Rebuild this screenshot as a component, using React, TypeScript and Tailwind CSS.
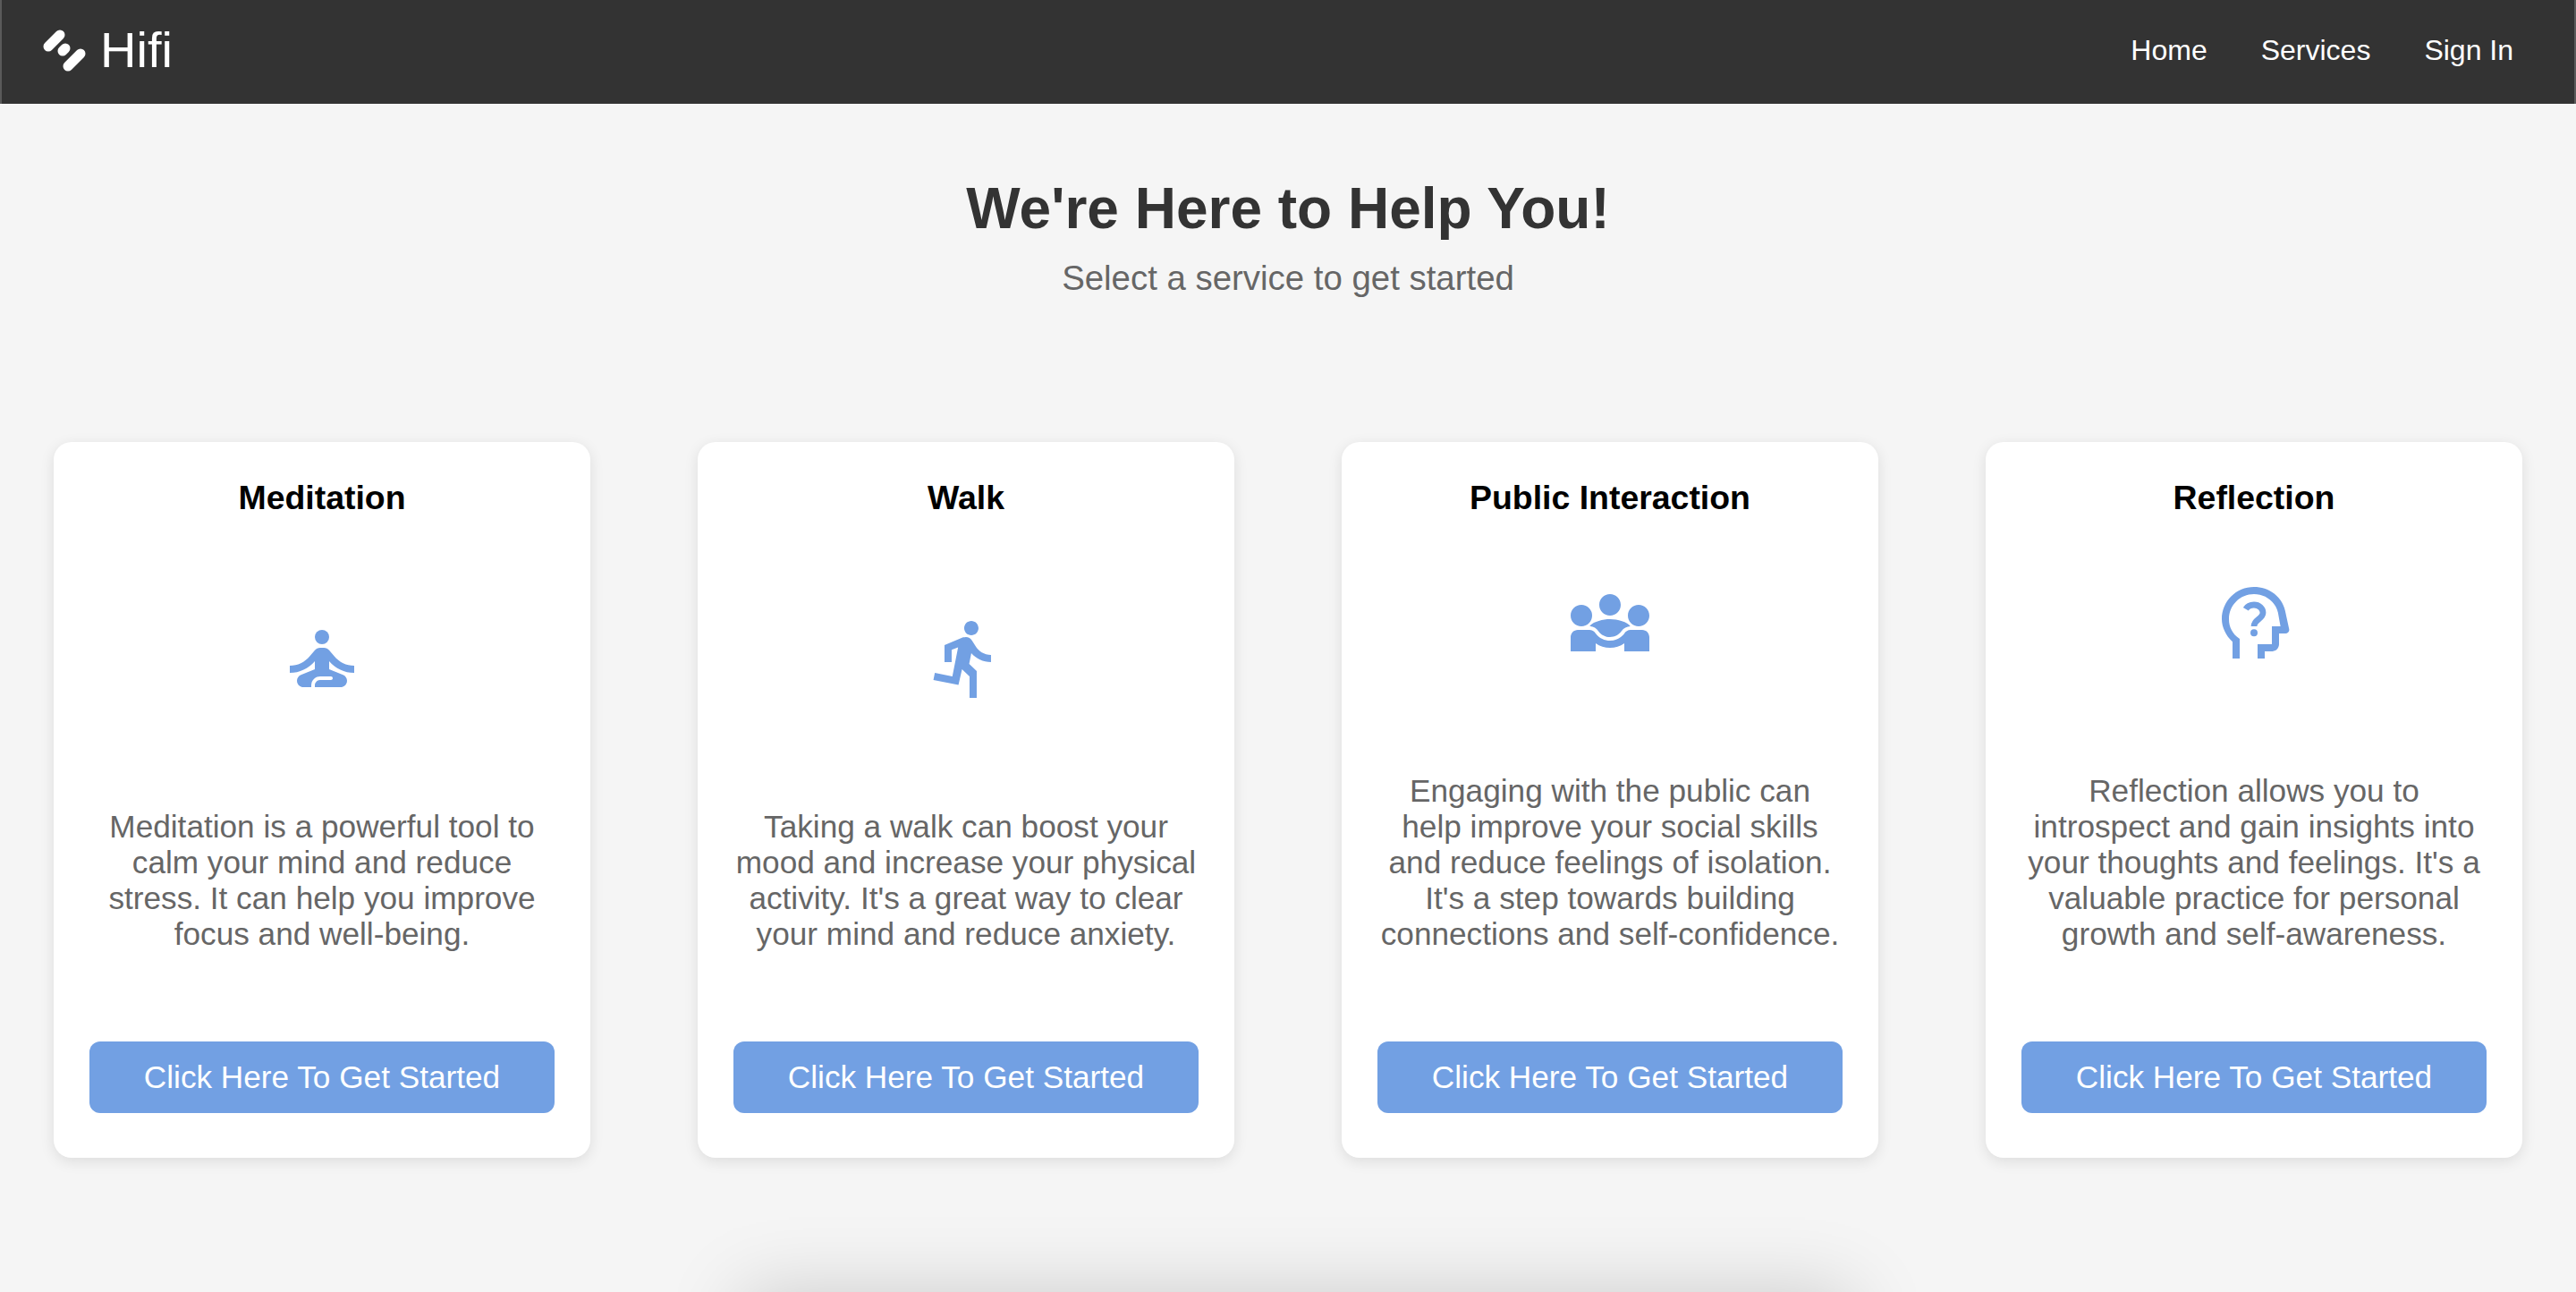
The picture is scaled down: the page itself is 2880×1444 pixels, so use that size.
import React from "react";

const services = [
  {
    title: "Meditation",
    text: "Meditation is a powerful tool to calm your mind and reduce stress. It can help you improve focus and well-being.",
    icon: (
      <>
        <circle cx="12" cy="6" r="2" />
        <path d="M21 16v-2c-2.24 0-4.16-.96-5.6-2.68l-1.34-1.6c-.38-.46-.94-.72-1.53-.72h-1.05c-.59 0-1.15.26-1.53.72l-1.34 1.6C7.16 13.04 5.24 14 3 14v2c2.77 0 5.19-1.17 7-3.25V15l-3.88 1.55c-.67.27-1.12.93-1.12 1.66C5 19.2 5.8 20 6.79 20H9v-.5c0-1.38 1.12-2.5 2.5-2.5h3c.28 0 .5.22.5.5s-.22.5-.5.5h-3c-.83 0-1.5.67-1.5 1.5v.5h7.21c.99 0 1.79-.8 1.79-1.79 0-.73-.45-1.39-1.12-1.66L14 15v-2.25c1.81 2.08 4.23 3.25 7 3.25z" />
      </>
    ),
  },
  {
    title: "Walk",
    text: "Taking a walk can boost your mood and increase your physical activity. It's a great way to clear your mind and reduce anxiety.",
    icon: (
      <path d="M13.49 5.48c1.1 0 2-.9 2-2s-.9-2-2-2-2 .9-2 2 .9 2 2 2zm-3.6 13.9l1-4.4 2.1 2v6h2v-7.5l-2.1-2 .6-3c1.3 1.5 3.3 2.5 5.5 2.5v-2c-1.9 0-3.5-1-4.3-2.4l-1-1.6c-.4-.6-1-1-1.7-1-.3 0-.5.1-.8.1l-5.2 2.2v4.7h2v-3.4l1.8-.7-1.6 8.1-4.9-1-.4 2 7 1.4z" />
    ),
  },
  {
    title: "Public Interaction",
    text: "Engaging with the public can help improve your social skills and reduce feelings of isolation. It's a step towards building connections and self-confidence.",
    icon: (
      <path d="M6.32,13.01c0.96,0.02,1.85,0.5,2.45,1.34C9.5,15.38,10.71,16,12,16c1.29,0,2.5-0.62,3.23-1.66c0.6-0.84,1.49-1.32,2.45-1.34C16.96,11.78,14.08,11,12,11c-2.07,0-4.96,0.78-5.68,2.01z M4,13L4,13c1.66,0,3-1.34,3-3c0-1.66-1.34-3-3-3h0c-1.66,0-3,1.34-3,3C1,11.66,2.34,13,4,13z M20,13L20,13c1.66,0,3-1.34,3-3c0-1.66-1.34-3-3-3h0c-1.66,0-3,1.34-3,3C17,11.66,18.34,13,20,13z M12,10c1.66,0,3-1.34,3-3c0-1.66-1.34-3-3-3h0C10.34,4,9,5.34,9,7C9,8.66,10.34,10,12,10z M21,14h-3.27c-0.77,0-1.35,0.45-1.68,0.92C16.01,14.98,14.69,17,12,17c-1.43,0-3.03-0.64-4.05-2.08C7.56,14.37,6.95,14,6.27,14H3c-1.1,0-2,0.9-2,2v4h7v-2.26c1.15,0.8,2.54,1.26,4,1.26s2.85-0.46,4-1.26V20h7v-4C23,14.9,22.1,14,21,14z" />
    ),
  },
  {
    title: "Reflection",
    text: "Reflection allows you to introspect and gain insights into your thoughts and feelings. It's a valuable practice for personal growth and self-awareness.",
    icon: (
      <>
        <path d="M6 22v-4.7C4.1 15.6 3 13.2 3 11 3 6 7 2 12 2c4.2 0 7.8 2.7 8.7 6.6l1.1 5.1c.2.7-.3 1.3-1 1.3H19v3c0 1.1-.9 2-2 2h-2v2h-2v-4h4v-5h2.4l-.7-3.9C18 6.2 15.3 4 12 4c-3.900 0-7 3.100-7 7 0 2.100.9 4.100 3 5.500V22H6z" />
        <circle cx="12" cy="14.800" r="1" />
        <path d="M9.700 8.200C10.100 7.500 11 7 12 7c1.400 0 2.500 1 2.500 2.200 0 1.800-2.500 1.800-2.500 3.800" fill="none" stroke="currentColor" strokeWidth="1.7" />
      </>
    ),
  },
];

export default function App() {
  return (
    <div className="relative h-[1444px] overflow-hidden bg-[#f5f5f5] font-['Liberation_Sans',Arial,sans-serif]">
      <header className="flex h-[116px] items-center justify-between border-x-2 border-[#5a5a5a] bg-[#333333] pr-[68px] pb-[4px] pl-[44px] text-white">
        <div className="flex items-center gap-[10px]">
          <svg width="56" height="56" viewBox="0 0 56 56" fill="none" stroke="#ffffff" strokeWidth="11" strokeLinecap="round" className="translate-y-[2px]">
            <path d="M8 22L21 9" />
            <path d="M24 27l3-3" />
            <path d="M30 44L44 30" />
          </svg>
          <span className="text-[56px] leading-none">Hifi</span>
        </div>
        <nav className="flex gap-[60px] text-[32px]">
          <a>Home</a>
          <a>Services</a>
          <a>Sign In</a>
        </nav>
      </header>

      <div className="pt-[80px] text-center">
        <h1 className="text-[64px] leading-[74px] font-bold text-[#333333]">We're Here to Help You!</h1>
        <p className="mt-[19px] text-[38.4px] leading-[44px] text-[#666666]">Select a service to get started</p>
      </div>

      <div className="mt-[161px] grid grid-cols-4 gap-[120px] px-[60px]">
        {services.map((s) => (
          <div key={s.title} className="flex h-[800px] flex-col rounded-[20px] bg-white px-[40px] pt-[40px] pb-[50px] text-center shadow-[0_4px_16px_rgba(0,0,0,0.1)]">
            <h3 className="text-[37.44px] leading-[44px] font-bold text-black">{s.title}</h3>
            <div className="flex flex-1 flex-col items-center justify-end">
              <svg width="96" height="96" viewBox="0 0 24 24" fill="currentColor" className="text-[#72a0e3]">
                {s.icon}
              </svg>
              <p className="mt-[120px] mb-[100px] text-[35.2px] leading-[40px] text-[#666666]">{s.text}</p>
              <button className="h-[80px] w-full rounded-[12px] bg-[#72a0e3] text-[35.2px] text-white">Click Here To Get Started</button>
            </div>
          </div>
        ))}
      </div>

      <div className="absolute top-[1444px] left-[830px] h-[300px] w-[1240px] shadow-[0_0_80px_rgba(0,0,0,0.17)]" />
    </div>
  );
}
